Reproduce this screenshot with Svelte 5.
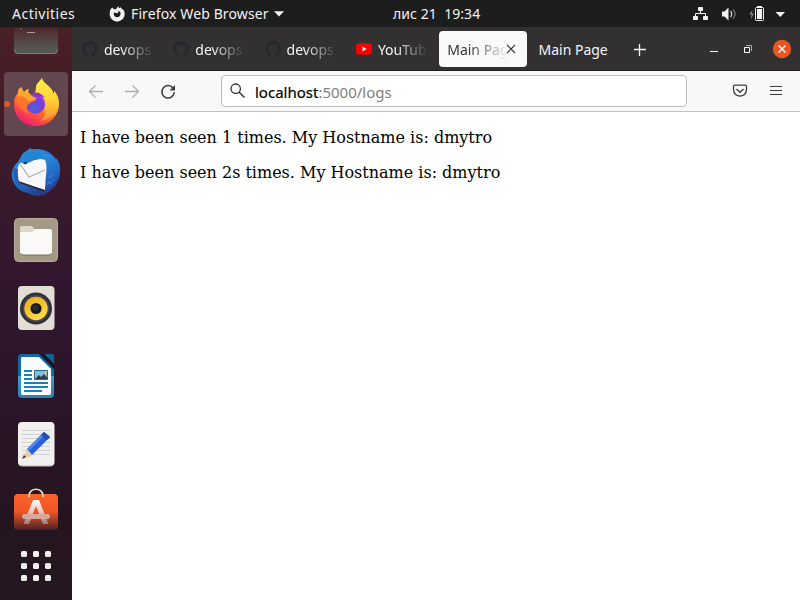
<script>
  const tabs = [
    { title: 'devops_', icon: 'github' },
    { title: 'devops_', icon: 'github' },
    { title: 'devops_', icon: 'github' },
    { title: 'YouTube', icon: 'youtube' },
    { title: 'Main Page', active: true },
    { title: 'Main Page' }
  ];
  const lines = [
    'I have been seen 1 times. My Hostname is: dmytro',
    'I have been seen 2s times. My Hostname is: dmytro'
  ];
  const dots = [0, 1, 2, 3, 4, 5, 6, 7, 8];
</script>

<div class="desktop">
  <header class="topbar">
    <span class="activities">Activities</span>
    <svg class="fox" width="16" height="16" viewBox="0 0 16 16"><path fill="#f2f2f2" fill-rule="evenodd" d="M3.200 1.500 5 3.200 7 3.300 9 .2l1.200 2 1.600-.9 1 1.700 1.300.4A7.500 7.500 0 1 1 .8 6.500C.9 4.300 1.800 2.700 3.200 1.500zM5.300 6.200c-1.500 2.500.3 5 2.700 5s4-2 3.500-4.200c-.3-1.400-1.200-2-2.300-2.200.8 1.800-.6 2.300-1.800 2.500z"/></svg>
    <span class="appname">Firefox Web Browser</span>
    <svg class="caret" width="10" height="6" viewBox="0 0 10 6"><path d="M0 .3h10L5 5.500z" fill="#f2f2f2"/></svg>
    <span class="clock">лис 21&nbsp; 19:34</span>
    <svg class="status" width="96" height="20" viewBox="690 3 96 20">
      <g fill="#f2f2f2">
        <rect x="698" y="6" width="5" height="4" rx=".7"/><rect x="693" y="15" width="5" height="4" rx=".7"/><rect x="703" y="15" width="5" height="4" rx=".7"/>
        <path d="M722 10.500h2.500l4-4v13l-4-4H722z"/>
        <path d="M775.500 11h9.500l-4.700 5z"/>
      </g>
      <path d="M700.500 10v3M695.500 15v-2.500h10V15" fill="none" stroke="#f2f2f2"/>
      <path d="M730.500 10q2.500 3 0 6" fill="none" stroke="#ddd" stroke-width="1.200"/>
      <path d="M733 8.500q4.500 4.500 0 9" fill="none" stroke="#777" stroke-width="1.200"/>
      <path d="M752.500 8.500l-3 5h2l-.7 5 3-6h-2z" fill="#8a8a8a"/>
      <rect x="755.500" y="6.500" width="8" height="13" rx="1" fill="none" stroke="#f2f2f2"/>
      <path d="M757 8h5v10h-5zM757 5h5v1.500h-5z" fill="#f2f2f2"/>
    </svg>
  </header>

  <div class="main">
    <nav class="dock">
      <svg width="64" height="45" viewBox="4 27 64 45">
        <defs><linearGradient id="term" x2="0" y2="1"><stop offset=".05" stop-color="#502c30"/><stop offset=".8" stop-color="#555653"/></linearGradient></defs>
        <path d="M14 28h44v22a4 4 0 0 1-4 4H18a4 4 0 0 1-4-4z" fill="url(#term)"/>
        <path d="M14.500 49.500a4 4 0 0 0 4 4h35a4 4 0 0 0 4-4" fill="none" stroke="#807f7c"/>
        <path d="M27 32.500h8" stroke="#aa9697"/><path d="M20 29h2" stroke="#89686b"/>
      </svg>
      <div class="tile">
        <svg width="64" height="64" viewBox="4 72 64 64">
          <defs>
            <linearGradient id="ff" x1=".8" y1="0" x2=".25" y2="1"><stop stop-color="#fff44f"/><stop offset=".4" stop-color="#ffb82a"/><stop offset=".65" stop-color="#ff642f"/><stop offset="1" stop-color="#ed147c"/></linearGradient>
            <radialGradient id="globe" cx=".4" cy=".7" r=".75"><stop stop-color="#4f62dc"/><stop offset=".55" stop-color="#743fd7"/><stop offset="1" stop-color="#a33bdd"/></radialGradient>
            <linearGradient id="flame" x2="0" y2="1"><stop stop-color="#fff44f"/><stop offset=".5" stop-color="#ffd337"/><stop offset="1" stop-color="#ff8c30"/></linearGradient>
          </defs>
          <path fill="url(#ff)" d="M22 87c0 3 1 4 2 5 2-2 3-3 5-3-1 2-1 4 1 5l4 2c2-5 2-9 2-10 1-3 3-4 6-6 1 5 7 7 10 12l2 3v-4c4 4 5 9 5 13 0 12-10 22-23 22s-22-9-22-22c0-5 1-8 4-11 0-3 1-5 4-6z"/>
          <path fill="url(#flame)" d="M35 95c1-4 1-9 3-12 1-2 3-3 4-5 1 5 7 7 10 12l2 4v-3c4 5 5 9 4 14-1 9-9 15-18 16 5-4 6-8 4-13-1-7-5-9-9-13z"/>
          <circle cx="35.500" cy="104" r="9.700" fill="url(#globe)"/>
          <path fill="#8f2fd2" d="M31 94c4-3 11-1 14 4-4-2-9-2-14-4z"/>
          <path fill="#ff752e" d="M16 96c3-3 8-3 12-1l8 3c1 2-1 3-4 4-2 1-4 2-5 4-1 3 0 6 3 8-8-2-14-9-14-18z"/>
          <path fill="#ffa62f" d="M18 93c0-3 1-5 4-6 0 3 1 4 2 5 2 2 6 3 10 5l2 1c-1 2-5 3-8 3-2-4-6-6-10-4z"/>
        </svg>
      </div>
      <svg width="64" height="68" viewBox="4 138 64 68">
        <defs><linearGradient id="bird" x2=".7" y2="1"><stop stop-color="#3499df"/><stop offset=".5" stop-color="#2178d0"/><stop offset="1" stop-color="#273079"/></linearGradient><linearGradient id="wing" x2=".2" y2="1"><stop stop-color="#2f91df"/><stop offset=".55" stop-color="#206bc8"/><stop offset="1" stop-color="#293a91"/></linearGradient></defs>
        <path fill="url(#bird)" d="M22 155c2-4 5-3 8-7 2 2 4 1 6 1 14 0 24 10 24 23 0 5-1 8-3 11l-1 3-3 1-1 3-4 1-2 3-7 2c-4 0-8-1-11-3-8-1-14-7-16-15-1-7 2-13 6-16z"/>
        <path fill="#f8f8fa" d="m20 163 24-5c5 2 5 13 1 32l-27-8c-2-6-2-13 2-19z"/>
        <path d="m20 164 9 13 16-7" fill="none" stroke="#aeb0b8" stroke-width="1.200"/>
        <path d="M16 181l29 10" stroke="#29223f" stroke-width="1.700"/>
        <path fill="#2384d2" d="M21 160c2-6 8-9 14-8 8 1 13 5 14 10-8-6-15-2-21 1-3 2-6 2-7-3z"/>
        <path fill="url(#wing)" d="M41 154c8-1 13 3 15 8v-4c7 8 4 20-1 25l-1 4-3 1-1 3-4 2-2 2c2-7 1-13 2-19 1-10 1-16-5-22z"/>
        <path d="m48 178 2-3 1 3 3-5M47 185l2-4 1 3 4-5" fill="none" stroke="#347fdd"/>
        <circle cx="25.500" cy="163" r="1.300" fill="#17334c"/>
        <path d="M14 168c-2 12 4 20 11 23-5-5-8-12-7-22z" fill="#225eb3"/>
      </svg>
      <svg width="64" height="68" viewBox="4 206 64 68">
        <rect x="14.500" y="218.500" width="43" height="43" rx="4" fill="#a39a86" stroke="#b8ae9b"/>
        <path d="M20 228a2 2 0 0 1 2-2h10l3 4v4H20z" fill="#ddd7c9"/>
        <path d="M20 232h12l3-3h15a2 2 0 0 1 2 2v21a3 3 0 0 1-3 3H23a3 3 0 0 1-3-3z" fill="#faf9f7"/>
        <path d="M20.500 253q1 2 3 2h25q2 0 3-2" fill="none" stroke="#777060"/>
      </svg>
      <svg width="64" height="68" viewBox="4 274 64 68">
        <defs><linearGradient id="cone" x2=".6" y2="1"><stop stop-color="#e9ab0c"/><stop offset="1" stop-color="#ffd951"/></linearGradient></defs>
        <rect x="18" y="286" width="36.500" height="44" rx="4" fill="#e2ded5"/>
        <circle cx="36" cy="308.500" r="16" fill="#30303a"/><circle cx="36" cy="308.500" r="13.500" fill="#45434b"/>
        <circle cx="36" cy="308.500" r="11.700" fill="url(#cone)"/><circle cx="36" cy="308.500" r="5.500" fill="#151719"/><circle cx="35.500" cy="308" r="3" fill="#292b2e"/>
      </svg>
      <svg width="64" height="68" viewBox="4 342 64 68">
        <defs><linearGradient id="writer" x2="0" y2="1"><stop stop-color="#126ba0"/><stop offset=".49" stop-color="#126ba0"/><stop offset=".5" stop-color="#479aca"/><stop offset="1" stop-color="#2780b5"/></linearGradient></defs>
        <path d="M22 354h17l15 15v25a4 4 0 0 1-4 4H22a4 4 0 0 1-4-4v-36a4 4 0 0 1 4-4z" fill="url(#writer)"/>
        <path d="M22 357h17l12 12v24q0 2-2 2H23q-2 0-2-2v-34q0-2 1-2z" fill="#fafcfd"/>
        <path d="M44 354h8q2 0 2 2v8z" fill="#0f6394"/><path d="M40 354h4l10 10v5z" fill="#171526"/>
        <path d="M24 371h8M24 375h8M24 379h8M24 383h24M24 387h24M24 391h18" stroke="#1781b8" stroke-width="2"/>
        <path d="M34.500 370.500h13v9h-13z" fill="#83bdde" stroke="#246887"/><path d="m35 379 4-4 2 2 3-3 4 5z" fill="#333d42"/><path d="M44 371h3v3z" fill="#f1c94d"/>
      </svg>
      <svg width="64" height="68" viewBox="4 410 64 68">
        <rect x="18" y="422" width="36.500" height="44" rx="4" fill="#f0f0ef"/><path d="M19 465q2 1 3 1h28q2 0 3-1" stroke="#bbb" fill="none"/>
        <path d="M22 430.500h28M22 434.500h28M22 438.500h28M22 442.500h28M22 446.500h28M22 450.500h28M22 454.500h28" stroke="#d2d2d2"/>
        <path d="m22 459 5-9 5 6z" fill="#f1c99f"/><path d="m22 459 2-4 2 2z" fill="#393533"/>
        <path d="m27 449 17-17 6 5-18 18z" fill="#2860d8"/><path d="m27 449 17-17 2 2-17 17z" fill="#4e86ef"/><path d="m41 435 3-3 6 5-3 3z" fill="#204db7"/>
      </svg>
      <svg width="64" height="56" viewBox="4 478 64 56">
        <defs><linearGradient id="bag" x2="0" y2="1"><stop stop-color="#ff632a"/><stop offset=".5" stop-color="#ed5525"/><stop offset="1" stop-color="#4b2124"/></linearGradient><linearGradient id="letter" x2="0" y2="1"><stop stop-color="#fff"/><stop offset=".6" stop-color="#e8b6a6"/><stop offset="1" stop-color="#997c7b"/></linearGradient></defs>
        <path d="M14 498a4 4 0 0 1 4-4h36a4 4 0 0 1 4 4v28a4 4 0 0 1-4 4H18a4 4 0 0 1-4-4z" fill="url(#bag)"/>
        <path d="M29 497v-1c0-9 14-9 14 0v1" fill="none" stroke="#f6ddba" stroke-width="1.700"/>
        <path d="M23.500 524 33 500h6l9.500 24H43l-7-18-7 18z" fill="url(#letter)"/><rect x="22" y="514" width="28" height="5" rx="2.500" fill="#d4a89d"/>
      </svg>
      <div class="apps">{#each dots as d (d)}<i></i>{/each}</div>
      <b class="running"></b>
    </nav>

    <section class="browser">
      <div class="tabs">
        {#each tabs as tab, i (i)}
          <div class="tab" class:active={tab.active} class:faded={tab.icon || tab.active}>
            {#if tab.icon === 'github'}
              <svg width="16" height="16" viewBox="0 0 16 16"><path fill="#24292e" d="M8 0a8 8 0 0 0-2.500 15.600c.4.100.5-.200.5-.400v-1.500c-2 .400-2.500-.500-2.700-1-.100-.200-.500-.900-.900-1.100-.300-.200-.700-.500 0-.500s1.100.600 1.300.800c.700 1.200 1.900.900 2.300.700.100-.500.300-.900.500-1.100-1.800-.200-3.600-.900-3.600-4 0-.900.300-1.600.800-2.100-.100-.200-.400-1 .100-2.100 0 0 .7-.200 2.200.800a7.600 7.600 0 0 1 4 0c1.500-1 2.200-.800 2.200-.800.500 1.100.2 1.900.1 2.100.5.600.8 1.300.8 2.100 0 3.100-1.900 3.800-3.700 4 .3.200.6.700.6 1.500v2.200c0 .200.100.500.5.400A8 8 0 0 0 8 0z"/></svg>
            {:else if tab.icon === 'youtube'}
              <svg width="16" height="16" viewBox="0 0 16 16"><rect y="2.300" width="16" height="11.400" rx="3" fill="#f00"/><path d="m6.500 5.600 4 2.400-4 2.400z" fill="#fff"/></svg>
            {/if}
            <span class="title">{tab.title}</span>
            {#if tab.active}<svg class="x" width="10" height="10" viewBox="0 0 10 10"><path d="m1 1 8 8M9 1 1 9" stroke="#333" stroke-width="1.100"/></svg>{/if}
          </div>
        {/each}
        <svg class="controls" width="172" height="36" viewBox="624 31 172 36">
          <path d="M634 49.500h12M639.500 44v12" stroke="#f5f5f5" stroke-width="1.300" fill="none"/>
          <path d="M710 51.500h8" stroke="#fff"/>
          <path d="M744.500 47.500h5v5h-5z" stroke="#fff" fill="none"/><path d="M746 45.500h5.500V51" stroke="#aaa" fill="none"/>
          <circle cx="782" cy="49" r="9.200" fill="#e95420"/><path d="m778.500 45.500 7 7m0-7-7 7" stroke="#fff" stroke-width="1.400"/>
        </svg>
      </div>

      <div class="toolbar">
        <svg width="112" height="40" viewBox="72 71 112 40" fill="none">
          <path d="M103 91.500H89.500m6-6-6 6 6 6M125 91.500h13.500m-6-6 6 6-6 6" stroke="#b0b0b0" stroke-width="1.300"/>
          <path d="M173 88a6.200 6.200 0 1 0 1.300 4" stroke="#3d3d3d" stroke-width="1.500"/><path d="M175 85v5.500h-5.500z" fill="#3d3d3d"/>
        </svg>
        <div class="address">
          <svg width="16" height="16" viewBox="0 0 16 16"><circle cx="5.700" cy="5.700" r="4.700" fill="none" stroke="#333" stroke-width="1.300"/><path d="m9 9 5.500 5.500" stroke="#333" stroke-width="1.500"/></svg>
          <span class="url"><span class="host">localhost</span>:5000/logs</span>
        </div>
        <svg class="tools" width="16" height="16" viewBox="732 83 16 16" fill="none" stroke="#3d3d3d">
          <path d="M735 85.100h10q1.500 0 1.500 1.500v3c0 8.700-13 8.700-13 0v-3q0-1.500 1.500-1.500z" stroke-width="1.300"/><path d="m736.500 89 3.500 3.300 3.500-3.300" stroke-width="1.400"/>
        </svg>
        <svg class="menu" width="12" height="12" viewBox="0 0 12 12"><path d="M0 1.500h12M0 5.500h12M0 9.500h12" stroke="#3d3d3d" stroke-width="1.200"/></svg>
      </div>

      <div class="page">
        {#each lines as line (line)}<p>{line}</p>{/each}
      </div>
    </section>
  </div>
</div>

<style>
  :global(body) { margin: 0; }
  .desktop { width: 800px; height: 600px; overflow: hidden; display: flex; flex-direction: column; font: 14px/20px 'Noto Sans', sans-serif; }
  svg { display: block; flex: none; }
  .topbar { height: 27px; flex: none; display: flex; align-items: center; background: #1d1d1d; color: #f2f2f2; white-space: nowrap; box-sizing: border-box; padding-left: 12px; }
  .activities { width: 97px; letter-spacing: .5px; }
  .appname { width: 143px; margin-left: 6px; letter-spacing: .12px; }
  .caret { margin-top: 1px; }
  .clock { width: 297px; margin-left: 109px; letter-spacing: .05px; }
  .main { display: flex; height: 573px; }
  .dock { width: 72px; box-sizing: border-box; padding: 0 4px; position: relative; flex: none; background: linear-gradient(#4a2026 0, #421c26 15%, #3a1a2b 25%, #32172e 42%, #2b152a 65%, #25151f 88%, #24171e 100%); }
  .tile { height: 64px; margin-bottom: 2px; border-radius: 4px; background: #624650; }
  .running { position: absolute; left: 4px; top: 74px; width: 6px; height: 6px; border-radius: 50%; background: #e95420; }
  .apps { display: grid; grid-template-columns: repeat(3, 6px); gap: 6px; padding: 17px; }
  .apps i { width: 6px; height: 6px; border-radius: 1.5px; background: #f1f0ed; }
  .browser { flex: 1; background: #fff; display: flex; flex-direction: column; }
  .tabs { height: 44px; flex: none; box-sizing: border-box; padding: 4px 4px 3px 2px; display: flex; align-items: center; background: #323031; border-bottom: 1px solid #202020; }
  .tab { width: 88px; height: 36px; flex: none; box-sizing: border-box; margin-right: 3.3px; padding-left: 8px; border-radius: 4px; display: flex; align-items: center; color: #f5f5f5; position: relative; }
  .title { margin-left: 6px; padding-top: 2px; white-space: nowrap; overflow: hidden; width: 48px; }
  .faded .title { mask-image: linear-gradient(90deg, #000 35%, transparent 105%); }
  .tab:not(.faded) .title, .active .title { margin-left: 0; }
  .tab:not(.faded) .title { width: auto; }
  .active { background: #f9f9f9; color: #333; }
  .active .title { width: 59px; }
  .x { position: absolute; right: 11px; top: 13px; }
  .controls { margin-left: auto; }
  .toolbar { height: 41px; flex: none; box-sizing: border-box; display: flex; align-items: center; background: #f8f8f8; border-bottom: 1px solid #c2c2c2; }
  .address { width: 466px; height: 32px; box-sizing: border-box; border: 1px solid #bdbdbd; border-radius: 4px; background: #fff; display: flex; align-items: center; margin-left: 37px; padding-left: 8px; }
  .url { margin-left: 9px; padding-top: 1px; color: #808080; font-size: 15px; }
  .host { color: #000; -webkit-text-stroke: .2px #000; }
  .tools { margin-left: 45px; }
  .menu { margin-left: 22px; }
  .page { padding: 16px 8px; font: 16px/19px 'DejaVu Serif', serif; color: #000; }
  .page p { margin: 0 0 16px; }
</style>
